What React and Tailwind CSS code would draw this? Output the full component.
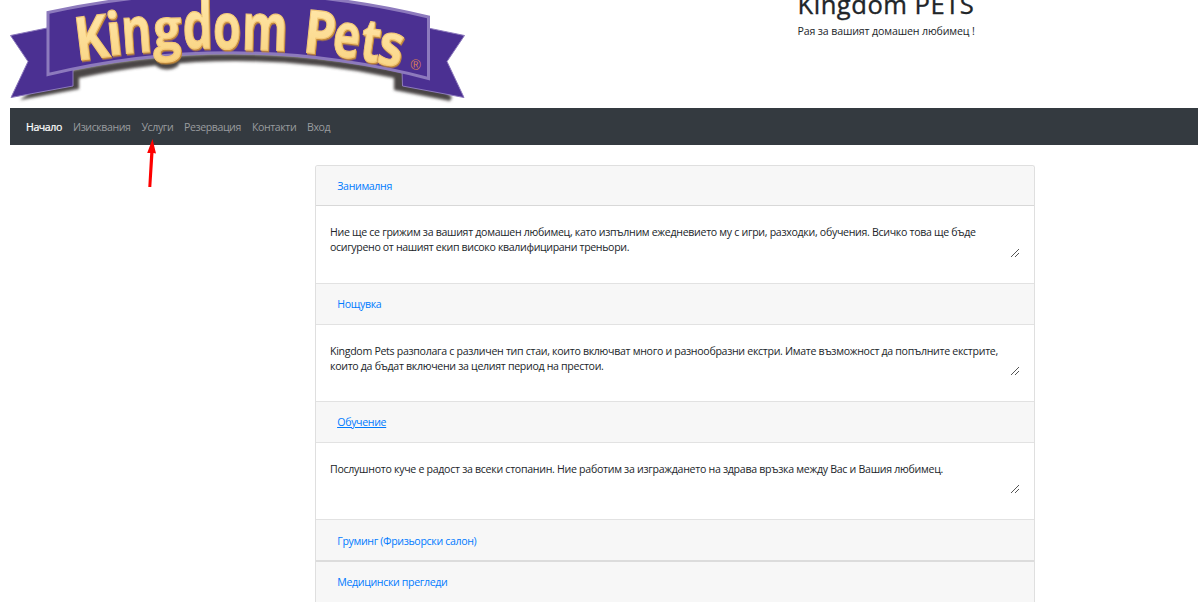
const letters = [
  { c: 'K', x: 77, y: 60.5, w: 34, s: 60, r: -7 },
  { c: 'i', x: 108.5, y: 55.5, w: 15.5, s: 59, r: -6 },
  { c: 'n', x: 122.8, y: 53.5, w: 30, s: 64, r: -4 },
  { c: 'g', x: 153.5, y: 49, w: 28, s: 56, r: -1 },
  { c: 'd', x: 183, y: 48.5, w: 30, s: 66, r: -1 },
  { c: 'o', x: 213, y: 48.5, w: 28, s: 65, r: 0 },
  { c: 'm', x: 241.5, y: 49.5, w: 45.5, s: 65, r: 1.5 },
  { c: 'P', x: 302, y: 52, w: 32, s: 60, r: 6 },
  { c: 'e', x: 331, y: 55.5, w: 27, s: 62, r: 7 },
  { c: 't', x: 358.5, y: 60, w: 19.5, s: 60, r: 8 },
  { c: 's', x: 375.5, y: 62.5, w: 25, s: 58, r: 11 },
];

function Logo() {
  return (
    <svg className="block h-[108px] w-[480px] shrink-0" viewBox="0 0 480 108" role="img" aria-label="Kingdom Pets">
      <defs>
        <filter id="soft" x="-10%" y="-20%" width="120%" height="150%"><feGaussianBlur stdDeviation="1.800" /></filter>
        <filter id="bevel" x="-5%" y="-20%" width="110%" height="150%">
          <feDropShadow dx="1" dy="1.500" stdDeviation="0.400" floodColor="#c58a38" floodOpacity="1" />
        </filter>
        <linearGradient id="gold" x1="0" y1="0" x2="0" y2="1">
          <stop offset="0.25" stopColor="#ffe5a6" />
          <stop offset="1" stopColor="#f8d17c" />
        </linearGradient>
      </defs>
      <g fill="#484444" filter="url(#soft)">
        <path d="M20 100 L79 89 L79 78 Q235 44 394 78 L394 90 L450 101 L452 97 L430 77 Q235 32 54 74 Z" />
        <ellipse cx="167" cy="63" rx="12" ry="6.500" />
      </g>
      <path d="M10.500 35.500 L47 28 L73 70 L73 86 L11 97.500 L28 61.500 Z" fill="#4b3092" stroke="#8d7abd" strokeWidth="1" />
      <path d="M464.500 35.500 L428 28 L402 70 L402.500 86 L464 97.500 L447 61.500 Z" fill="#4b3092" stroke="#8d7abd" strokeWidth="1" />
      <path d="M48 12.500 Q238 -29 428.500 17 L428.500 78.500 Q238 29 48 74.500 Z" fill="#4b3092" stroke="#8d7abd" strokeWidth="3" />
      <g fontFamily="'Open Sans', sans-serif" fontWeight="700" filter="url(#bevel)">
        {letters.map((l) => (
          <text key={l.x} transform={`translate(${l.x} ${l.y}) rotate(${l.r})`} fontSize={l.s} textLength={l.w} lengthAdjust="spacingAndGlyphs" fill="url(#gold)" stroke="#f3c878" strokeWidth="1.200">{l.c}</text>
        ))}
      </g>
      <text x="410.500" y="70" fontFamily="'Liberation Sans', sans-serif" fontSize="14" fill="#d87e55">®</text>
    </svg>
  );
}

const nav = [
  { label: 'Начало', w: 'w-[47px]' },
  { label: 'Изисквания', w: 'w-[68.500px]' },
  { label: 'Услуги', w: 'w-[42.500px]' },
  { label: 'Резервация', w: 'w-[68px]' },
  { label: 'Контакти', w: 'w-[55px]' },
  { label: 'Вход', w: 'w-[30px]' },
];

function Grip({ className }) {
  return (
    <svg className={`h-[9px] w-[9px] shrink-0 ${className}`} viewBox="0 0 9 9" shapeRendering="crispEdges" stroke="#555" strokeWidth="1">
      <path d="M0.500 8.500 L8.500 0.500 M4.500 8.500 L8.500 4.500" />
    </svg>
  );
}

function Title({ children, className }) {
  return (
    <div className={`flex shrink-0 items-center bg-[#f7f7f7] pl-[21.300px] tracking-[-0.350px] text-[#007bff] ${className}`}>
      <a className="whitespace-nowrap">{children}</a>
    </div>
  );
}

function Body({ children, className, grip = 'mt-[42px]' }) {
  return (
    <div className={`flex shrink-0 justify-between pr-[15px] pl-[14px] ${className}`}>
      <div className="mt-[19px] leading-[15px] whitespace-nowrap">{children}</div>
      <Grip className={grip} />
    </div>
  );
}

export default function App() {
  return (
    <div className="h-[602px] w-[1198px] overflow-hidden bg-white font-['Open_Sans',sans-serif] text-[10.600px] text-[#212529]">
      <header className="flex h-[108px]">
        <Logo />
        <div className="ml-[317.500px]">
          <h1 className="-mt-[11px] text-[25.600px] leading-[32px] font-medium tracking-[0.500px] whitespace-nowrap [-webkit-text-stroke:0.350px_#212529]">Kingdom PETS</h1>
          <p className="mt-[2px] leading-[16px] tracking-[-0.130px] whitespace-nowrap">Рая за вашият домашен любимец !</p>
        </div>
      </header>
      <div className="relative ml-[10px]">
        <nav className="flex h-[37px] items-center bg-[#343a40] pt-[2px] pl-[16px] tracking-[-0.420px] text-[#999c9f]">
          {nav.map((n, i) => (
            <a key={n.label} className={`shrink-0 whitespace-nowrap ${n.w} ${i === 0 ? 'text-white [-webkit-text-stroke:0.200px_white]' : ''}`}>{n.label}</a>
          ))}
        </nav>
        <svg className="absolute top-[30px] left-[134px] h-[52px] w-[16px]" viewBox="0 0 16 52" fill="#fe0000">
          <path d="M8.500 1 L12 15.500 L9.500 15 L7.300 49 L4.300 49 L6.200 15 L3.200 15 Z" />
        </svg>
      </div>
      <main className="mt-[20px] ml-[315px] flex h-[437px] w-[720px] flex-col overflow-hidden rounded-t-[3px] border-x border-t border-[#dfdfdf]">
        <Title className="h-[40px] border-b border-[#d8d8d8] pt-[2px]">Занималня</Title>
        <Body className="h-[77px]" grip="mt-[43px]">
          <span className="tracking-[-0.305px]">Ние ще се грижим за вашият домашен любимец, като изпълним ежедневието му с игри, разходки, обучения. Всичко това ще бъде</span><br />
          <span className="tracking-[-0.350px]">осигурено от нашият екип високо квалифицирани треньори.</span>
        </Body>
        <Title className="h-[42px] border-y border-[#e2e2e2] pt-[2px]">Нощувка</Title>
        <Body className="h-[76px]">
          <span className="tracking-[-0.305px]">Kingdom Pets разполага с различен тип стаи, които включват много и разнообразни екстри. Имате възможност да попълните екстрите,</span><br />
          <span className="tracking-[-0.310px]">които да бъдат включени за целият период на престои.</span>
        </Body>
        <Title className="h-[42px] border-y border-[#e2e2e2] pt-[2px] underline">Обучение</Title>
        <Body className="h-[76px]">
          <span className="tracking-[-0.290px]">Послушното куче е радост за всеки стопанин. Ние работим за изграждането на здрава връзка между Вас и Вашия любимец.</span>
        </Body>
        <Title className="h-[43px] border-t border-b-2 border-t-[#e2e2e2] border-b-[#dcdcdc] pt-[3px]">Груминг (Фризьорски салон)</Title>
        <Title className="h-[41px]">Медицински прегледи</Title>
      </main>
    </div>
  );
}
